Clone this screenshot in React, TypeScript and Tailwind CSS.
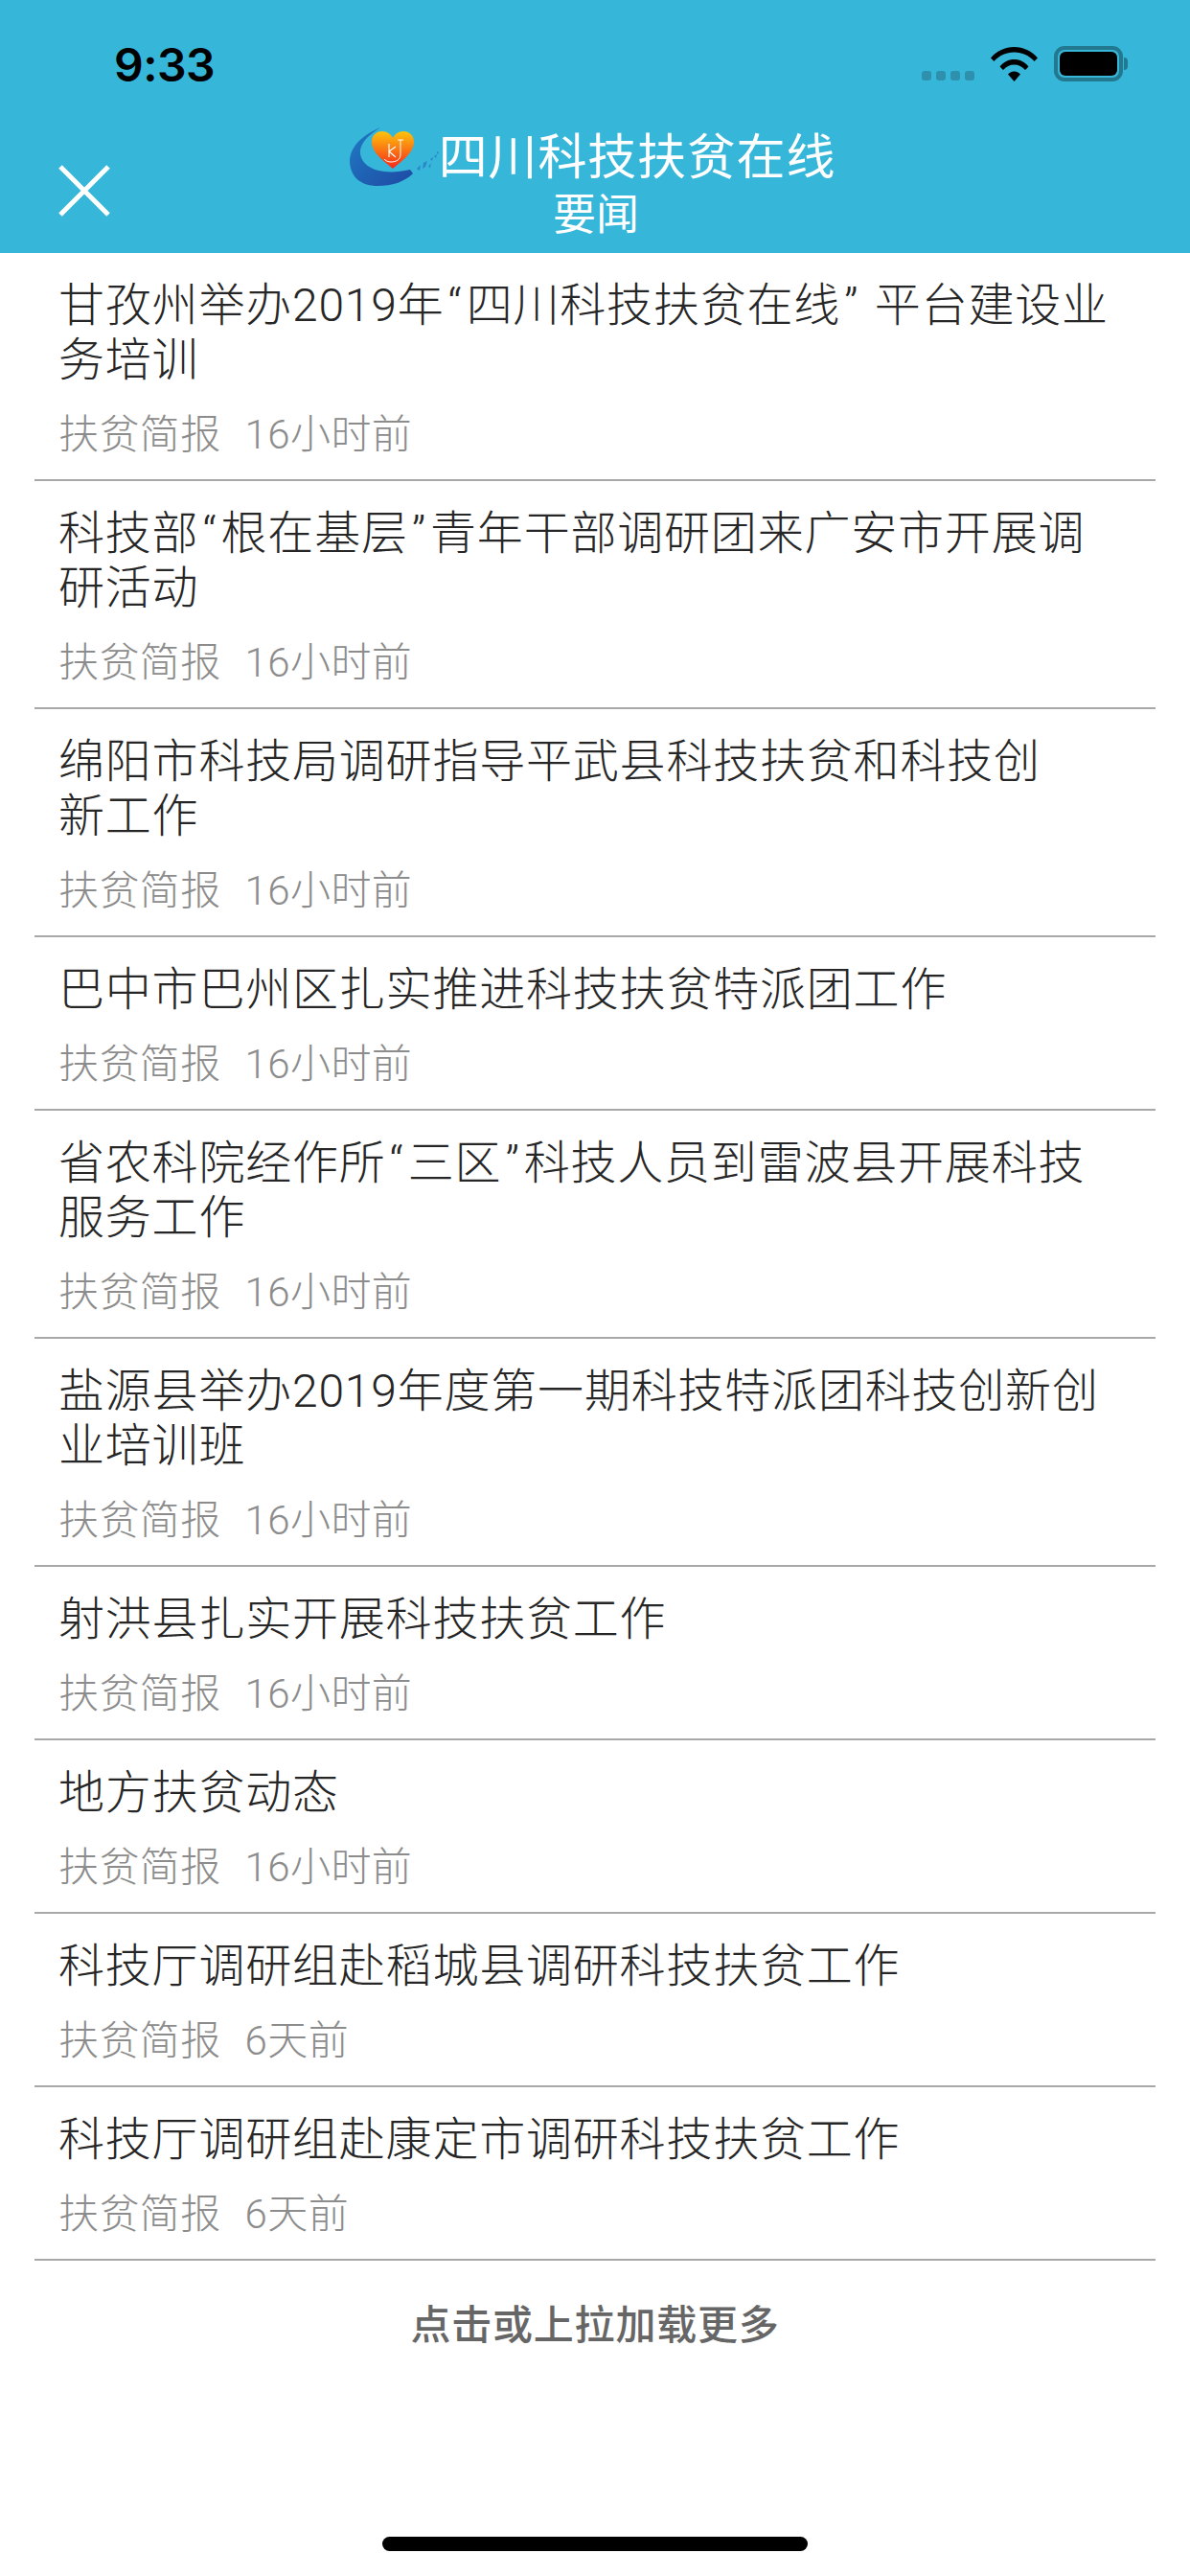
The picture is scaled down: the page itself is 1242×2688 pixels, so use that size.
const items = [
  { t: "甘孜州举办2019年“四川科技扶贫在线” 平台建设业\n务培训", d: "16小时前" },
  { t: "科技部“根在基层”青年干部调研团来广安市开展调\n研活动", d: "16小时前" },
  { t: "绵阳市科技局调研指导平武县科技扶贫和科技创\n新工作", d: "16小时前" },
  { t: "巴中市巴州区扎实推进科技扶贫特派团工作", d: "16小时前" },
  { t: "省农科院经作所“三区”科技人员到雷波县开展科技\n服务工作", d: "16小时前" },
  { t: "盐源县举办2019年度第一期科技特派团科技创新创\n业培训班", d: "16小时前" },
  { t: "射洪县扎实开展科技扶贫工作", d: "16小时前" },
  { t: "地方扶贫动态", d: "16小时前" },
  { t: "科技厅调研组赴稻城县调研科技扶贫工作", d: "6天前" },
  { t: "科技厅调研组赴康定市调研科技扶贫工作", d: "6天前" },
];

function Title({ text }: { text: string }) {
  return (
    <>
      {text.split("\n").map((line) => (
        <div key={line} className="whitespace-pre">
          {line.split(/([“”])/).map((p, i) =>
            p === "“" || p === "”" ? <span key={i} className="mx-[4px]">{p}</span> : p
          )}
        </div>
      ))}
    </>
  );
}

function Logo() {
  return (
    <svg width="96" height="66" viewBox="364 132 96 66" className="shrink-0">
      <defs>
        <linearGradient id="heart" x1="0" y1="0" x2="0" y2="1">
          <stop offset="0" stopColor="#fdc40c" />
          <stop offset="1" stopColor="#f8261a" />
        </linearGradient>
        <linearGradient id="sw" x1="0" y1="0" x2="1" y2="1">
          <stop offset="0" stopColor="#1f7cc4" />
          <stop offset="1" stopColor="#1f49a4" />
        </linearGradient>
      </defs>
      <path d="M397 133C378 141 365 153 365 169C366 186 378 194 394 194C409 194 422 190 431 181L428 177C415 180 404 180 395 178C383 175 375 167 376 157C377 148 386 140 397 133Z" fill="url(#sw)" />
      <path d="M410 176C401 168 388 160 388 148C388 141 393 137 399 137C404 137 408 140 410 144C412 140 416 137 421 137C427 137 432 141 432 148C432 160 419 168 410 176Z" fill="url(#heart)" />
      <path d="M406 150V164M413 153L406 158L413 164" fill="none" stroke="#fff" strokeWidth="1.2" />
      <path d="M415 146H421M418 146V161C418 167 413 169 408 169C404 169 402 167 401 166" fill="none" stroke="#fff" strokeWidth="1" />
      <path d="M435 176L439 172L438 178ZM442 170L446 168L444 174L441 176ZM447 174L450 170L449 175ZM449 166L452 164L451 168ZM453 163L456 161L455 165ZM456 158L458 159L456 161Z" fill="#2b86c9" />
    </svg>
  );
}

function StatusIcons() {
  return (
    <div className="flex items-center">
      <div className="flex gap-[5px] mt-[24px] mr-[17px]">
        <span className="w-[10px] h-[10px] rounded-[3px] bg-[#2f90ad]" />
        <span className="w-[10px] h-[10px] rounded-[3px] bg-[#2f90ad]" />
        <span className="w-[10px] h-[10px] rounded-[3px] bg-[#2f90ad]" />
        <span className="w-[10px] h-[10px] rounded-[3px] bg-[#2f90ad]" />
      </div>
      <svg width="49" height="36" viewBox="0 0 49 36" className="mr-[17px]">
        <path d="M0 11.5C6.5 4 15 0 24.5 0S42.500 4 49 11.500L45.500 15C40 9 33 5.500 24.500 5.500S9 9 3.500 15Z" fill="#000" />
        <path d="M9.500 20.500C13.500 15.500 18.500 13 24.500 13S35.500 15.500 39.500 20.500L36 24C33 20.500 29 18.500 24.500 18.500S16 20.500 13 24Z" fill="#000" />
        <path d="M18 28.500C20 26.500 22 25.500 24.500 25.500S29 26.500 31 28.500L24.500 36Z" fill="#000" />
      </svg>
      <div className="flex items-center">
        <div className="w-[72px] h-[37px] rounded-[11px] border-[4px] border-[#21788f] p-[2px]">
          <div className="w-full h-full rounded-[6px] bg-black" />
        </div>
        <div className="w-[4px] h-[13px] rounded-r-[4px] bg-[#21788f] ml-[1px]" />
      </div>
    </div>
  );
}

export default function App() {
  return (
    <div
      className="w-[1242px] h-[2688px] bg-white flex flex-col overflow-hidden"
      style={{ fontFamily: 'Roboto, "Noto Sans CJK SC", sans-serif' }}
    >
      <header className="h-[264px] bg-[#36b6d9] shrink-0 flex flex-col">
        <div className="h-[132px] pt-[48px] pl-[119px] pr-[65px] flex justify-between items-start">
          <span className="text-[48px] leading-[40px] text-black" style={{ fontFamily: '"Inter", sans-serif', fontWeight: 600, letterSpacing: "-0.5px" }}>9:33</span>
          <StatusIcons />
        </div>
        <div className="grid grid-cols-[1fr_auto_1fr] px-[61px]">
          <svg width="54" height="54" viewBox="0 0 54 54" className="mt-[40px]">
            <path d="M2 2L52 52M52 2L2 52" stroke="#fff" strokeWidth="5" />
          </svg>
          <div className="flex flex-col items-center">
            <div className="flex items-center -ml-[6px]">
              <Logo />
              <span className="text-[51px] leading-[64px] tracking-[0.8px] text-white font-normal -ml-[2px]">四川科技扶贫在线</span>
            </div>
            <span className="text-[45px] leading-[54px] text-white font-normal pl-[2px]">要闻</span>
          </div>
          <div />
        </div>
      </header>

      <ul className="px-[36px]">
        {items.map((it) => (
          <li key={it.t} className="pt-[26px] pb-[22px] border-b-[2px] border-[#a8a8a8]">
            <h2 className="pl-[25px] text-[48px] leading-[57px] tracking-[0.8px] font-light text-[#262626]">
              <Title text={it.t} />
            </h2>
            <div className="pl-[25px] mt-[25px] text-[42px] leading-[49px] tracking-[0.4px] font-light text-[#8c8c8c] flex gap-[25px]">
              <span>扶贫简报</span>
              <span>{it.d}</span>
            </div>
          </li>
        ))}
      </ul>

      <div className="mt-[43px] text-center text-[42px] leading-[50px] tracking-[0.8px] font-medium text-[#666666]">点击或上拉加载更多</div>

      <div className="mt-auto mb-[26px] mx-auto w-[444px] h-[15px] rounded-full bg-black" />
    </div>
  );
}
